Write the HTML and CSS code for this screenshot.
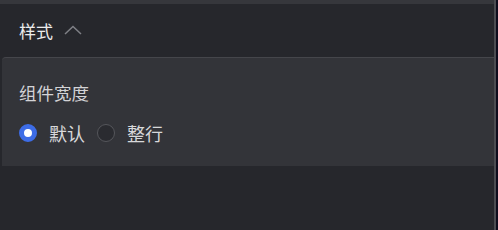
FILE: index.html
```html
<!DOCTYPE html>
<html lang="zh-CN">
<head>
  <meta charset="UTF-8" />
  <meta name="viewport" content="width=device-width, initial-scale=1.0" />
  <title>样式</title>
  <link rel="stylesheet" href="styles.css">
</head>
<body>
  <div class="panel">
    <div class="topbar"></div>
    <div class="section-head">
      <span>样式</span>
      <svg class="chevron" width="18" height="10" viewBox="0 0 18 10">
        <path d="M1 9 L9 1.5 L17 9" fill="none" stroke="currentColor" stroke-width="1.5"/>
      </svg>
    </div>
    <div class="card">
      <div class="label">组件宽度</div>
      <div class="radios">
        <label class="radio checked"><span class="dot"></span>默认</label>
        <label class="radio"><span class="dot"></span>整行</label>
      </div>
    </div>
  </div>
</body>
</html>
```

FILE: styles.css
```css
html {
  background: #0e0c1c;
}
body {
  margin: 0;
  font-family: "Noto Sans CJK SC", "Noto Sans", sans-serif;
  background: #0e0c1c;
  height: 230px;
}
.panel {
  width: 494px;
  height: 230px;
  background: #26272c;
  border-right: 2px solid #4b4c51;
  display: flex;
  flex-direction: column;
}
.topbar {
  height: 4px;
  background: #36373c;
}
.section-head {
  height: 53px;
  display: flex;
  align-items: center;
  gap: 11px;
  padding-left: 19px;
  font-size: 17px;
  color: #ececec;
}
.chevron {
  color: #7f8086;
  margin-top: -2px;
}
.card {
  margin-left: 2px;
  background: #333439;
  border-top: 1px solid #45464b;
  border-top-left-radius: 4px;
  padding: 23px 0 21px 17px;
}
.label {
  font-size: 17.5px;
  line-height: 24px;
  color: #d3d3d6;
}
.radios {
  margin-top: 16px;
  display: flex;
  gap: 12px;
  height: 24px;
  align-items: center;
}
.radio {
  display: flex;
  align-items: center;
  gap: 12px;
  font-size: 18px;
  color: #d8d8da;
}
.dot {
  width: 16px;
  height: 16px;
  border-radius: 50%;
  border: 1px solid #55565b;
  background: #2a2b30;
  box-sizing: content-box;
}
.radio.checked .dot {
  width: 8px;
  height: 8px;
  border: 5px solid #3d6ce6;
  background: #ffffff;
}
```
